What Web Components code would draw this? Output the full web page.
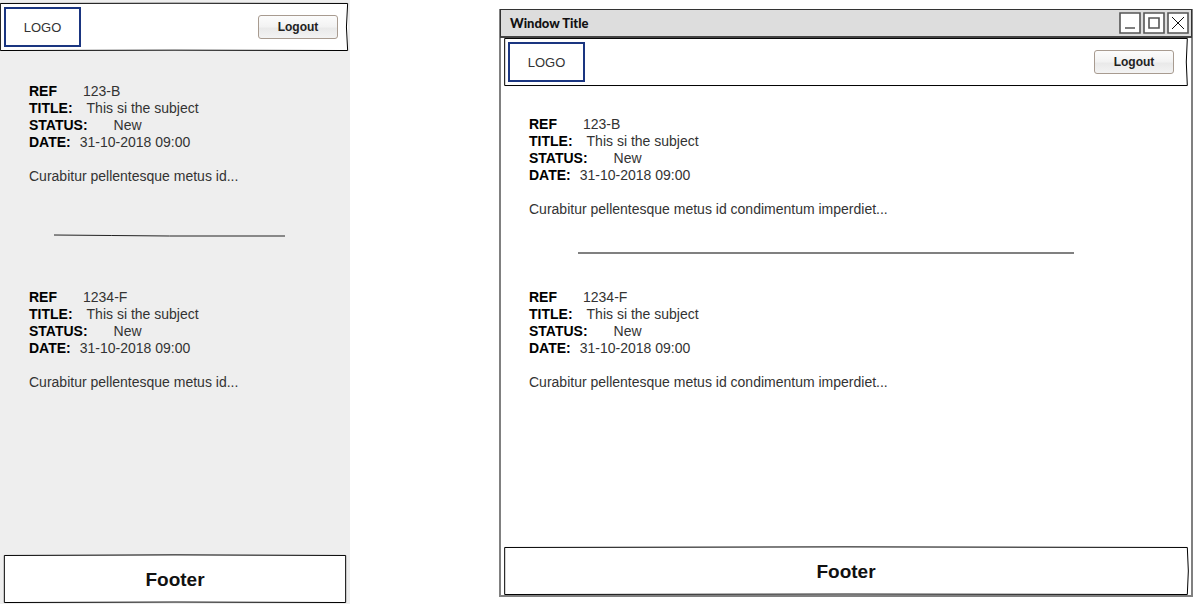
<!DOCTYPE html>
<html lang="en">
<head>
<meta charset="utf-8">
<title>Ticket list wireframes</title>
<style>
  body { margin: 0; background: #fff; color: #333; font: 14px/17px "Liberation Sans", Arial, sans-serif; }
</style>
</head>
<body>
<wire-board></wire-board>
<script>
class Wire extends HTMLElement {
  constructor() {
    super();
    const root = this.attachShadow({ mode: "open" });
    const t = document.createElement("template");
    t.innerHTML = this.constructor.markup;
    root.append(t.content.cloneNode(true));
  }
}

// Hand-drawn rectangle behind slotted content
class SketchBox extends Wire {
  static markup = `<style>
    :host { display: block; position: relative; box-sizing: border-box; background: #fff; }
    svg { position: absolute; inset: 0; width: 100%; height: 100%; overflow: visible; pointer-events: none; }
    path { fill: none; stroke: #000; stroke-width: 1; vector-effect: non-scaling-stroke; }
  </style>
  <svg viewBox="0 0 100 100" preserveAspectRatio="none" aria-hidden="true"><path/></svg><slot></slot>`;
  static shapes = {
    header: "M.1 1 Q50 0 99.9 1 Q99.2 50 99.9 99 Q50 97.5 .1 99 Z",
    wide: "M.1 1 H99.9 Q99.6 50 99.9 99 H.1 Z",
    footer: "M.1 1 Q50 -1.5 99.9 1 V99 Q50 97 .1 99 Z",
    bowed: "M.1 1 Q50 -1.5 99.9 1 Q100.2 50 99.9 99 Q50 97 .1 99 Z"
  };
  connectedCallback() {
    this.shadowRoot.querySelector("path").setAttribute("d", SketchBox.shapes[this.getAttribute("shape")] || SketchBox.shapes.wide);
  }
}
customElements.define("sketch-box", SketchBox);

class AppHeader extends Wire {
  static markup = `<style>
    :host { display: block; }
    header { display: flex; align-items: center; justify-content: space-between; height: 48px; box-sizing: border-box; padding: 0 var(--header-end, 10px) 0 4px; }
    .logo { display: grid; place-items: center; box-sizing: border-box; width: 77px; height: 40px; border: 2px solid #1a3580; font-size: 13px; }
    button { width: 80px; height: 24px; padding: 0; border: 1px solid #a89b90; border-radius: 3px; background: linear-gradient(#fcfcfc, #f2f2f2 50%, #e9e9e9 55%, #f3f3f3); color: #222; font: bold 12px/17px "Liberation Sans", Arial, sans-serif; }
  </style>
  <header><div class="logo">LOGO</div><button type="button">Logout</button></header>`;
}
customElements.define("app-header", AppHeader);

class AppFooter extends Wire {
  static markup = `<style>
    :host { display: block; }
    footer { display: grid; place-items: center; height: 48px; color: #111; font-size: 19px; font-weight: bold; }
  </style><footer><slot></slot></footer>`;
}
customElements.define("app-footer", AppFooter);

class TicketField extends Wire {
  static markup = `<style>
    :host { display: flex; gap: 9px; }
    :host([gap="wide"]) { gap: 26px; }
    :host([gap="mid"]) { gap: 14px; }
    b { color: #000; }
  </style><b></b><span><slot></slot></span>`;
  connectedCallback() { this.shadowRoot.querySelector("b").textContent = this.getAttribute("label"); }
}
customElements.define("ticket-field", TicketField);

class TicketCard extends Wire {
  static markup = `<style>
    :host { display: block; padding-left: 29px; }
    p { margin: 17px 0 0; }
  </style>
  <ticket-field label="REF" gap="wide"><slot name="ref"></slot></ticket-field>
  <ticket-field label="TITLE:" gap="mid">This si the subject</ticket-field>
  <ticket-field label="STATUS:" gap="wide">New</ticket-field>
  <ticket-field label="DATE:">31-10-2018 09:00</ticket-field>
  <p><slot></slot></p>`;
}
customElements.define("ticket-card", TicketCard);

class SketchRule extends Wire {
  static markup = `<style>
    :host { display: block; height: 2px; }
    svg { display: block; width: 100%; height: 2px; overflow: visible; }
    path { fill: none; stroke: #222; stroke-width: 1; vector-effect: non-scaling-stroke; }
    :host([level]) svg { display: none; }
    :host([level]) { background: #808080; }
  </style>
  <svg viewBox="0 0 100 2" preserveAspectRatio="none" aria-hidden="true"><path d="M0 0 L25 .5 L50 1 H100"/></svg>`;
}
customElements.define("sketch-rule", SketchRule);

class PhoneScreen extends Wire {
  static markup = `<style>
    :host { display: flex; flex-direction: column; box-sizing: border-box; min-height: 100vh; padding: 3px 0 1px; background: #eee; }
    .head { margin-right: 2px; }
    main { padding: 32px 0; }
    sketch-rule { margin: 50px 65px 52px 54px; }
    .foot { margin: auto 4px 0; }
  </style>
  <sketch-box class="head" shape="header"><app-header></app-header></sketch-box>
  <main>
    <ticket-card><span slot="ref">123-B</span>Curabitur pellentesque metus id...</ticket-card>
    <sketch-rule></sketch-rule>
    <ticket-card><span slot="ref">1234-F</span>Curabitur pellentesque metus id...</ticket-card>
  </main>
  <sketch-box class="foot" shape="footer"><app-footer>Footer</app-footer></sketch-box>`;
}
customElements.define("phone-screen", PhoneScreen);

class WindowBar extends Wire {
  static markup = `<style>
    :host { display: flex; align-items: center; gap: 2px; height: 29px; box-sizing: border-box; margin: 0 -1px; padding: 0 2px 0 9px; background: #ddd; border: solid #333; border-width: 1px 1px 2px; border-bottom-color: #444; }
    h1 { flex: 1; margin: 0; color: #111; font: 900 13px/17px Lato, sans-serif; }
    button { display: block; width: 22px; height: 22px; padding: 0; border: 0; background: none; }
    svg { display: block; fill: #fff; stroke: #555; stroke-width: 1.6; }
  </style>
  <h1><slot></slot></h1>
  <button type="button" aria-label="Minimize"><svg width="22" height="22"><path d="M1 1H21V21H1Z M6 16H16"/></svg></button>
  <button type="button" aria-label="Maximize"><svg width="22" height="22"><path d="M1 1H21V21H1Z M6 6H16V16H6Z"/></svg></button>
  <button type="button" aria-label="Close"><svg width="22" height="22"><path d="M1 1H21V21H1Z"/><path stroke="#111" stroke-width="1" d="M5 5L17 17M17 5L5 17"/></svg></button>`;
}
customElements.define("window-bar", WindowBar);

class DesktopWindow extends Wire {
  static markup = `<style>
    :host { display: flex; flex-direction: column; box-sizing: border-box; border: 2px solid #808080; border-top: 0; --header-end: 14px; }
    .head { margin: 0 3px; }
    main { padding: 30px 0; }
    ticket-card { margin-left: -1px; }
    sketch-rule { margin: 34px 117px 35px 77px; }
    .foot { margin: auto 3px 0; }
  </style>
  <window-bar>Window Title</window-bar>
  <sketch-box class="head" shape="wide"><app-header></app-header></sketch-box>
  <main>
    <ticket-card><span slot="ref">123-B</span>Curabitur pellentesque metus id condimentum imperdiet...</ticket-card>
    <sketch-rule level></sketch-rule>
    <ticket-card><span slot="ref">1234-F</span>Curabitur pellentesque metus id condimentum imperdiet...</ticket-card>
  </main>
  <sketch-box class="foot" shape="bowed"><app-footer>Footer</app-footer></sketch-box>`;
}
customElements.define("desktop-window", DesktopWindow);

class WireBoard extends Wire {
  static markup = `<style>
    :host { display: grid; grid-template-columns: 350px minmax(0, 1fr); column-gap: 149px; min-height: 100vh; }
    desktop-window { margin: 9px 1px 7px 0; }
  </style><phone-screen></phone-screen><desktop-window></desktop-window>`;
}
customElements.define("wire-board", WireBoard);
</script>
</body>
</html>
